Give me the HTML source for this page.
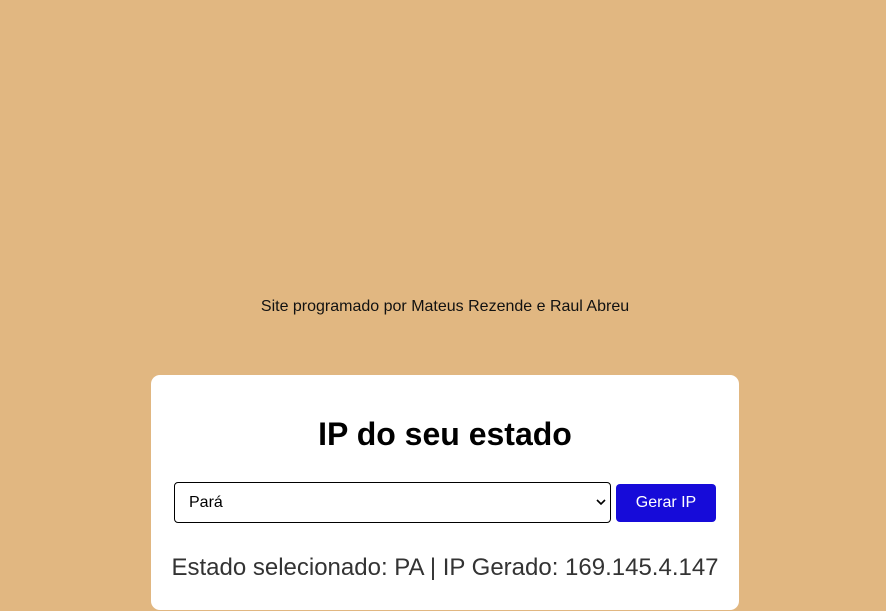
<!DOCTYPE html>
<html><head><style>
body{margin:0;width:886px;height:611px;background:#e1b781;font-family:"Liberation Sans",Arial,sans-serif;position:relative;overflow:hidden}
.foot{position:absolute;top:298px;left:0;width:890px;text-align:center;font-size:16px;color:#111}
.card{position:absolute;left:151px;top:375px;width:588px;height:235px;background:#fff;border-radius:9px}
h1{position:absolute;top:416px;left:151px;width:588px;margin:0;text-align:center;font-size:32px;font-weight:bold;color:#000}
.sel{position:absolute;left:174px;top:482px;width:435px;height:39px;border:1px solid #000;border-radius:4px;box-sizing:content-box;font-size:16px;line-height:39px}
.sel span{position:absolute;left:14px}
.sel svg{position:absolute;right:4px;top:15px}
.btn{position:absolute;left:616px;top:484px;width:100px;height:38px;background:#160bd9;border-radius:4px;color:#fff;font-size:16px;line-height:38px;text-align:center}
.res{position:absolute;top:554px;left:151px;width:588px;text-align:center;font-size:24px;color:#333}
</style></head><body>
<div class="foot">Site programado por Mateus Rezende e Raul Abreu</div>
<div class="card"></div>
<h1>IP do seu estado</h1>
<div class="sel"><span>Pará</span><svg width="10" height="8" viewBox="0 0 10 8"><path d="M1 2 L5 6 L9 2" fill="none" stroke="#000" stroke-width="1.6"/></svg></div>
<div class="btn">Gerar IP</div>
<div class="res">Estado selecionado: PA | IP Gerado: 169.145.4.147</div>
</body></html>
